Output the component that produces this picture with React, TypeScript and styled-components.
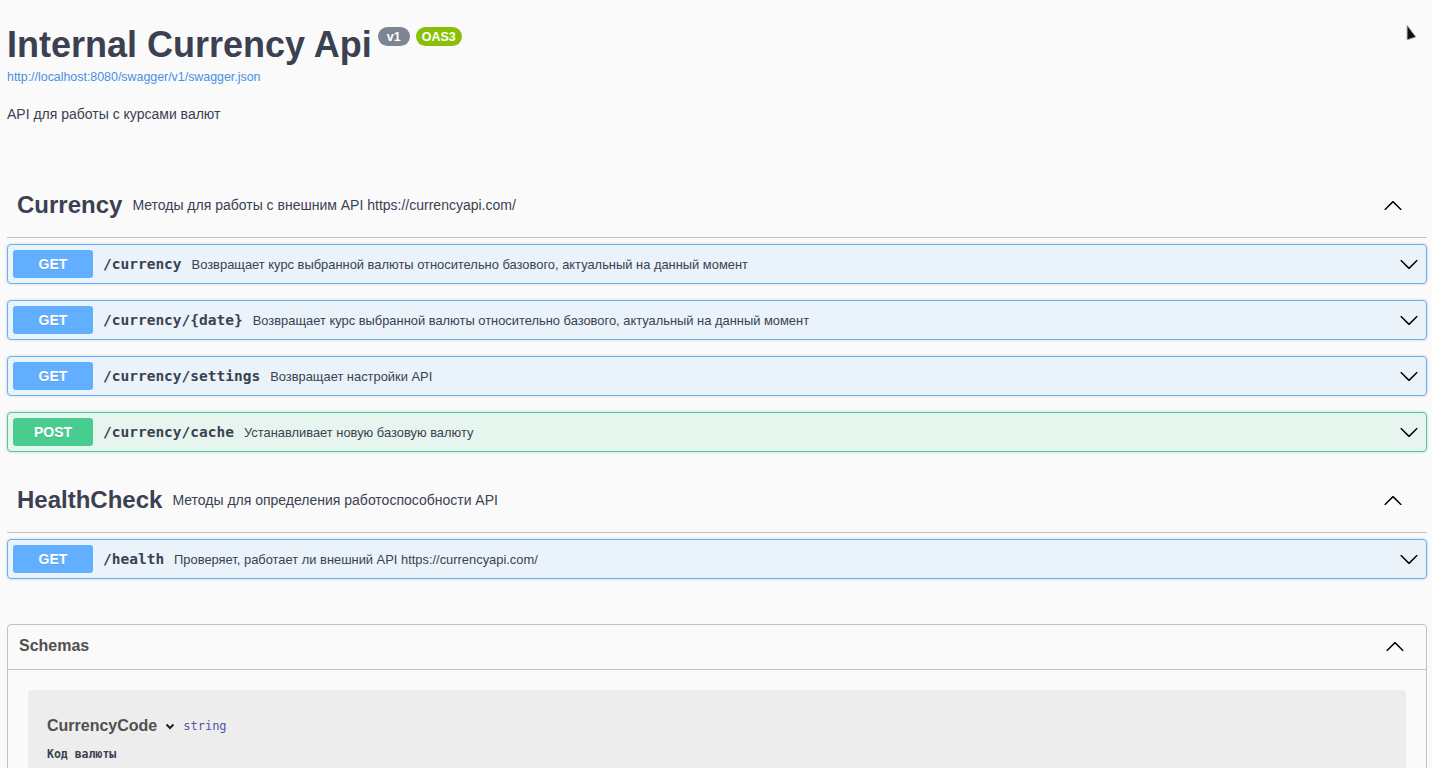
import styled, { createGlobalStyle } from "styled-components";

const GlobalStyle = createGlobalStyle`
    body {
        margin: 0;
        background: #fafafa;
        font-family: "Liberation Sans", Arial, sans-serif;
        color: #3b4151;
    }
`;

const Page = styled.div`
    position: relative;
    padding: 0 5px 40px 7px;
`;

const Info = styled.div`
    padding-top: 27px;
`;

const TitleRow = styled.div`
    display: flex;
    align-items: flex-start;
    gap: 6px;
`;

const Title = styled.h2`
    margin: 0;
    font-size: 36px;
    line-height: 36px;
    font-weight: 700;
    color: #3b4151;
`;

const Badge = styled.span<{ $bg: string; $w: number }>`
    display: inline-flex;
    justify-content: center;
    align-items: center;
    min-width: ${p => p.$w}px;
    height: 19px;
    box-sizing: border-box;
    padding: 0 6px;
    border-radius: 57px;
    background: ${p => p.$bg};
    color: #fff;
    font-size: 12.5px;
    font-weight: 700;
`;

const SpecLink = styled.a`
    display: block;
    margin-top: 7px;
    font-size: 12.4px;
    line-height: 15px;
    color: #4990e2;
    text-decoration: none;
`;

const Description = styled.p`
    margin: 21px 0 0;
    font-size: 14px;
    line-height: 17px;
    color: #3b4151;
`;

const TagSection = styled.section<{ $top: number }>`
    margin-top: ${p => p.$top}px;
`;

const Tag = styled.div`
    display: flex;
    align-items: center;
    height: 64px;
    padding: 0 24px 0 10px;
    border-bottom: 1px solid rgba(59, 65, 81, 0.3);
    margin-bottom: 6px;
`;

const TagName = styled.span`
    font-size: 24px;
    font-weight: 700;
    color: #3b4151;
`;

const TagDesc = styled.span`
    flex: 1;
    margin-left: 10px;
    font-size: 14px;
    color: #3b4151;
`;

const Opblock = styled.div<{ $color: string; $bg: string }>`
    display: flex;
    align-items: center;
    height: 40px;
    box-sizing: border-box;
    padding: 0 7px 0 5px;
    margin-bottom: 16px;
    border: 1px solid ${p => p.$color};
    border-radius: 4px;
    background: ${p => p.$bg};
    box-shadow: 0 0 3px rgba(0, 0, 0, 0.19);
`;

const Method = styled.span<{ $color: string }>`
    display: inline-flex;
    justify-content: center;
    align-items: center;
    width: 80px;
    height: 28px;
    border-radius: 3px;
    background: ${p => p.$color};
    color: #fff;
    font-size: 14px;
    font-weight: 700;
    text-shadow: 0 1px 0 rgba(0, 0, 0, 0.1);
`;

const Path = styled.span`
    margin-left: 10px;
    font-family: "DejaVu Sans Mono", "Liberation Mono", monospace;
    font-size: 14.5px;
    font-weight: 700;
    color: #3b4151;
`;

const Summary = styled.span`
    flex: 1;
    margin-left: 10px;
    font-size: 12.9px;
    color: #3b4151;
`;

const Models = styled.section`
    margin-top: 45px;
    border: 1px solid rgba(59, 65, 81, 0.3);
    border-radius: 4px;
`;

const ModelsHeader = styled.div`
    display: flex;
    align-items: center;
    justify-content: space-between;
    height: 45px;
    box-sizing: border-box;
    padding: 0 21px 3px 11px;
    border-bottom: 1px solid rgba(59, 65, 81, 0.3);
    font-size: 16px;
    font-weight: 700;
    color: #505050;
`;

const ModelsBody = styled.div`
    padding: 20px 20px 20px;
`;

const ModelBox = styled.div`
    padding: 27px 19px 60px;
    border-radius: 4px;
    background: rgba(0, 0, 0, 0.05);
`;

const ModelTitle = styled.div`
    display: flex;
    align-items: center;
    gap: 8px;
    font-size: 16px;
    font-weight: 700;
    color: #505050;
`;

const ModelType = styled.span`
    font-family: "DejaVu Sans Mono", "Liberation Mono", monospace;
    font-size: 12px;
    font-weight: 400;
    color: #55a;
`;

const ModelDesc = styled.div`
    margin-top: 12px;
    font-family: "DejaVu Sans Mono", "Liberation Mono", monospace;
    font-size: 11.5px;
    font-weight: 700;
    color: #3b4151;
`;

const Cursor = styled.svg`
    position: absolute;
    top: 24px;
    right: 13px;
`;

const ArrowDown = () => (
    <svg width="20" height="20" viewBox="0 0 20 20">
        <path
            fill="#000"
            d="M17.418 6.109c.272-.268.709-.268.979 0s.271.701 0 .969l-7.908 7.83c-.27.268-.707.268-.979 0l-7.908-7.83c-.27-.268-.27-.701 0-.969.271-.268.709-.268.979 0L10 13.25l7.418-7.141z"
        />
    </svg>
);

const ArrowUp = () => (
    <svg width="20" height="20" viewBox="0 0 20 20">
        <path
            fill="#000"
            d="M17.418 14.908c.272.268.709.268.979 0s.271-.701 0-.969l-7.908-7.83c-.27-.268-.707-.268-.979 0l-7.908 7.83c-.27.268-.27.701 0 .969.271.268.709.268.979 0L10 7.767l7.418 7.141z"
        />
    </svg>
);

const GET = { color: "#61affe", bg: "rgba(97, 175, 254, 0.1)" };
const POST = { color: "#49cc90", bg: "rgba(73, 204, 144, 0.1)" };

interface IOp {
    method: string;
    path: string;
    summary: string;
}

interface ITag {
    name: string;
    description: string;
    ops: IOp[];
}

const tags: ITag[] = [
    {
        name: "Currency",
        description: "Методы для работы с внешним API https://currencyapi.com/",
        ops: [
            { method: "GET", path: "/currency", summary: "Возвращает курс выбранной валюты относительно базового, актуальный на данный момент" },
            { method: "GET", path: "/currency/{date}", summary: "Возвращает курс выбранной валюты относительно базового, актуальный на данный момент" },
            { method: "GET", path: "/currency/settings", summary: "Возвращает настройки API" },
            { method: "POST", path: "/currency/cache", summary: "Устанавливает новую базовую валюту" },
        ],
    },
    {
        name: "HealthCheck",
        description: "Методы для определения работоспособности API",
        ops: [
            { method: "GET", path: "/health", summary: "Проверяет, работает ли внешний API https://currencyapi.com/" },
        ],
    },
];

function App() {
    return (
        <Page>
            <GlobalStyle />
            <Cursor width="14" height="18" viewBox="0 0 14 18">
                <path d="M2 1 L11 13 L2 16 Z" fill="#111" stroke="#bbb" strokeWidth="1" />
            </Cursor>
            <Info>
                <TitleRow>
                    <Title>Internal Currency Api</Title>
                    <Badge $bg="#7d8492" $w={32}>v1</Badge>
                    <Badge $bg="#89bf04" $w={45}>OAS3</Badge>
                </TitleRow>
                <SpecLink href="#">http://localhost:8080/swagger/v1/swagger.json</SpecLink>
                <Description>API для работы с курсами валют</Description>
            </Info>

            {tags.map((t, i) => (
                <TagSection key={t.name} $top={i === 0 ? 50 : 0}>
                    <Tag>
                        <TagName>{t.name}</TagName>
                        <TagDesc>{t.description}</TagDesc>
                        <ArrowUp />
                    </Tag>
                    {t.ops.map(op => {
                        const c = op.method === "POST" ? POST : GET;
                        return (
                            <Opblock key={op.path} $color={c.color} $bg={c.bg}>
                                <Method $color={c.color}>{op.method}</Method>
                                <Path>{op.path}</Path>
                                <Summary>{op.summary}</Summary>
                                <ArrowDown />
                            </Opblock>
                        );
                    })}
                </TagSection>
            ))}

            <Models>
                <ModelsHeader>
                    <span>Schemas</span>
                    <ArrowUp />
                </ModelsHeader>
                <ModelsBody>
                    <ModelBox>
                        <ModelTitle>
                            CurrencyCode
                            <svg width="10" height="10" viewBox="0 0 10 10">
                                <path d="M1.5 3.5 L5 7 L8.5 3.5" fill="none" stroke="#222" strokeWidth="2" />
                            </svg>
                            <ModelType>string</ModelType>
                        </ModelTitle>
                        <ModelDesc>Код валюты</ModelDesc>
                    </ModelBox>
                </ModelsBody>
            </Models>
        </Page>
    );
}

export default App;
